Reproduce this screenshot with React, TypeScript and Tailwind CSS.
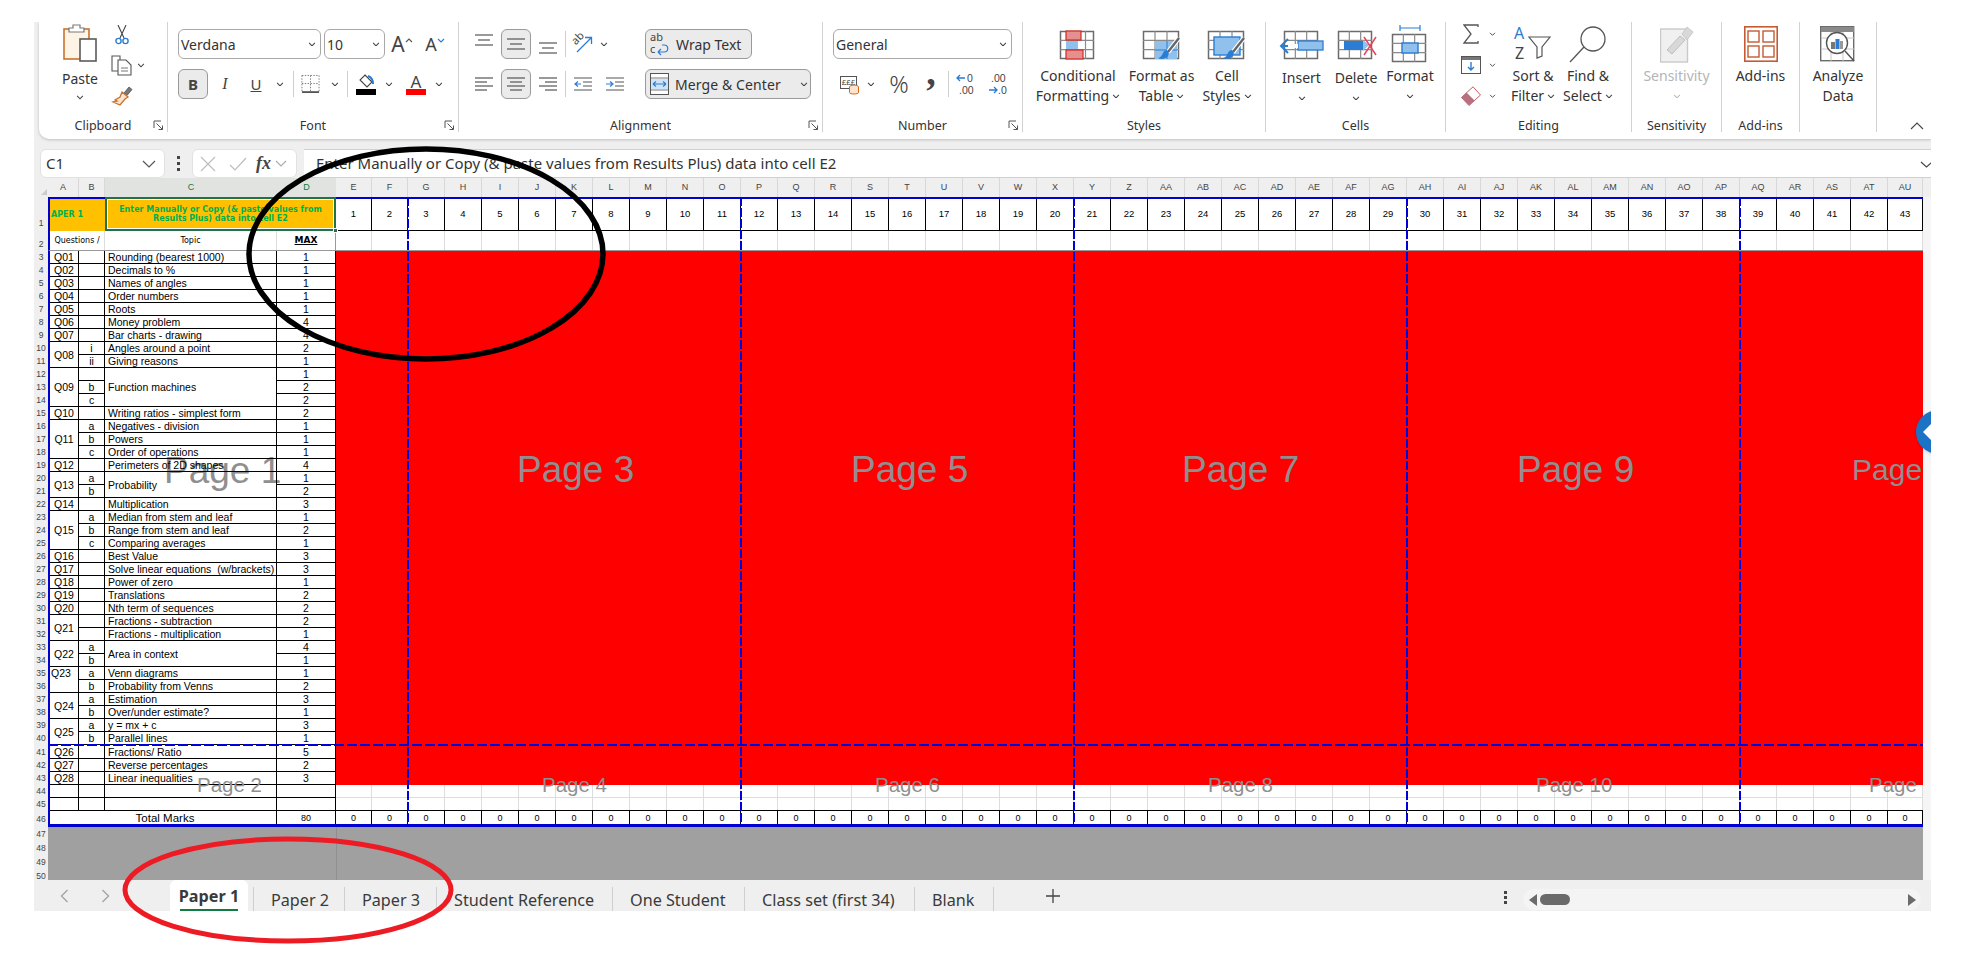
import React from "react";

const NOTO = "font-['Noto_Sans',sans-serif]";
const ARIAL = "font-['Liberation_Sans',Arial,sans-serif]";
const DEJA = "font-['DejaVu_Sans',Verdana,sans-serif]";

function Chev({ c = "#444", s = 8 }: { c?: string; s?: number }) {
  return (
    <svg width={s} height={s * 0.6} viewBox="0 0 8 5" className="shrink-0">
      <path d="M1 1l3 3 3-3" stroke={c} strokeWidth="1.1" fill="none" />
    </svg>
  );
}

function Sep() {
  return <div className="w-px h-[26px] mt-[2px] bg-[#cfcfcf] self-center shrink-0" />;
}

function Launcher() {
  return (
    <svg width="11" height="11" viewBox="0 0 11 11" className="shrink-0">
      <path d="M1 1h7M1 1v7" stroke="#555" strokeWidth="1" fill="none" />
      <path d="M3.5 3.5L9.5 9.5M9.5 5.5v4h-4" stroke="#555" strokeWidth="1" fill="none" />
    </svg>
  );
}

function PasteIcon() {
  return (
    <svg width="34" height="38" viewBox="0 0 34 38">
      <rect x="1" y="5" width="25" height="30" fill="#fdf4e6" stroke="#c9722c" strokeWidth="1.6" />
      <path d="M6 8V4h4V1h7v3h4v4z" fill="#fff" stroke="#7a7a7a" strokeWidth="1.2" />
      <rect x="17" y="15" width="16" height="22" fill="#fff" stroke="#5a5a5a" strokeWidth="1.6" />
    </svg>
  );
}
function ScissorsIcon() {
  return (
    <svg width="14" height="20" viewBox="0 0 14 20">
      <path d="M3 0l6 13M11 0L5 13" stroke="#444" strokeWidth="1.1" fill="none" />
      <circle cx="3.5" cy="16" r="2.6" fill="none" stroke="#2b7cd3" strokeWidth="1.4" />
      <circle cx="10.5" cy="16" r="2.6" fill="none" stroke="#2b7cd3" strokeWidth="1.4" />
    </svg>
  );
}
function CopyIcon() {
  return (
    <svg width="21" height="21" viewBox="0 0 21 21">
      <path d="M1 1h8v15H1z" fill="#fff" stroke="#555" strokeWidth="1.1" />
      <path d="M7 5h8l5 5v10H7z" fill="#fff" stroke="#555" strokeWidth="1.1" />
      <path d="M10 13h7M10 16h7" stroke="#777" strokeWidth="1" />
    </svg>
  );
}
function PainterIcon() {
  return (
    <svg width="22" height="20" viewBox="0 0 22 20">
      <path d="M13 7l5-6 3 2.5-5 6z" fill="#777" stroke="#555" strokeWidth="0.8" />
      <path d="M11 6l6 5-3 2-5 6-7-3 4-1-2-1 5-3z" fill="#fbe3cc" stroke="#c9722c" strokeWidth="1.3" />
    </svg>
  );
}
function GrowA({ up }: { up?: boolean }) {
  return (
    <div className="flex items-start">
      <span className={`text-[#444] leading-[24px] ${up ? "text-[21px]" : "text-[18px]"}`}>A</span>
      <svg width="8" height="6" viewBox="0 0 8 6" className="mt-[5px]">
        <path d={up ? "M1 5l3-3 3 3" : "M1 2l3 3 3-3"} stroke={up ? "#555" : "#2b7cd3"} strokeWidth="1.1" fill="none" />
      </svg>
    </div>
  );
}
function BorderIcon() {
  return (
    <svg width="20" height="20" viewBox="0 0 20 20">
      <path d="M1 1h18M1 1v17M19 1v17M10 1v17M1 9.5h18" stroke="#777" strokeWidth="1" strokeDasharray="1.5 1.5" fill="none" />
      <path d="M1 18.5h18" stroke="#333" strokeWidth="1.6" />
    </svg>
  );
}
function FillIcon() {
  return (
    <svg width="20" height="21" viewBox="0 0 20 21">
      <path d="M9 1l7 7-5 5-7-7z" fill="#fff" stroke="#444" strokeWidth="1.1" />
      <path d="M12 2c3 1 5 4 5 8" stroke="#2b7cd3" strokeWidth="2" fill="none" />
      <rect x="0" y="15" width="20" height="6" fill="#000" />
    </svg>
  );
}
function ColorA() {
  return (
    <div className="flex flex-col items-center w-[20px]">
      <span className="text-[17px] leading-[15px] text-[#444]">A</span>
      <span className="w-[20px] h-[6px] bg-[#f00]" />
    </div>
  );
}
function Lines({ kind, w = 18 }: { kind: "l" | "c" | "r"; w?: number }) {
  const a = kind === "l" ? [[0, 18], [0, 12], [0, 18], [0, 12]] : kind === "c" ? [[0, 18], [3, 15], [0, 18], [3, 15]] : [[0, 18], [6, 18], [0, 18], [6, 18]];
  return (
    <svg width={w} height="16" viewBox="0 0 18 16">
      {a.map((p, i) => (
        <path key={i} d={`M${p[0]} ${2 + i * 4}H${p[1]}`} stroke="#555" strokeWidth="1.2" />
      ))}
    </svg>
  );
}
function VAlign({ at }: { at: "t" | "m" | "b" }) {
  const ys = at === "t" ? [1, 6, 11] : at === "m" ? [3, 8, 13] : [4, 9, 14];
  const dy = at === "t" ? "-translate-y-[2px]" : at === "b" ? "translate-y-[3px]" : "";
  return (
    <svg width="18" height="16" viewBox="0 0 18 16" className={dy}>
      <path d={`M0 ${ys[0]}H18`} stroke="#555" strokeWidth="1.2" />
      <path d={`M3 ${ys[1]}H15`} stroke="#555" strokeWidth="1.2" />
      <path d={`M0 ${ys[2]}H18`} stroke="#555" strokeWidth="1.2" />
    </svg>
  );
}
function OrientIcon() {
  return (
    <div className="relative w-[24px] h-[24px]">
      <span className="absolute left-[0px] top-[-1px] text-[11px] leading-[14px] text-[#444] -rotate-45">ab</span>
      <svg width="24" height="24" viewBox="0 0 24 24" className="absolute left-0 top-0">
        <path d="M6 20L20 6M14 5.5h6.5V12" stroke="#2b7cd3" strokeWidth="1.3" fill="none" />
      </svg>
    </div>
  );
}
function Indent({ inc }: { inc?: boolean }) {
  return (
    <svg width="19" height="16" viewBox="0 0 19 16">
      <path d="M0 2h18M9 6h9M9 10h9M0 14h18" stroke="#555" strokeWidth="1.2" />
      <path d={inc ? "M0 8h6M4 5.5L7 8l-3 2.5" : "M7 8H1M4 5.5L1 8l3 2.5"} stroke="#2b7cd3" strokeWidth="1.2" fill="none" />
    </svg>
  );
}
function WrapIcon() {
  return (
    <div className="relative w-[20px] h-[26px] shrink-0 text-[11px] leading-[12px] text-[#444]">
      <span className="absolute left-0 top-0">ab</span>
      <span className="absolute left-0 top-[12px]">c</span>
      <svg width="20" height="26" viewBox="0 0 20 26" className="absolute left-0 top-0">
        <path d="M8 21h6c5 0 5-7 0-7h-2M8 21l3-3M8 21l3 3" stroke="#2b7cd3" strokeWidth="1.2" fill="none" />
      </svg>
    </div>
  );
}
function MergeIcon() {
  return (
    <svg width="19" height="22" viewBox="0 0 19 22" className="shrink-0">
      <rect x="0.5" y="0.5" width="18" height="21" fill="#fff" stroke="#555" />
      <path d="M1 5h17M1 17h17" stroke="#777" />
      <rect x="1" y="6" width="17" height="10" fill="#cfe4f7" />
      <path d="M3 11h13M3 11l3-2.5M3 11l3 2.5M16 11l-3-2.5M16 11l-3 2.5" stroke="#2b7cd3" strokeWidth="1.1" fill="none" />
    </svg>
  );
}
function AccountIcon() {
  return (
    <div className="relative w-[20px] h-[22px]">
      <span className={`absolute left-[1px] top-[3px] w-[17px] h-[13px] border border-[#555] bg-white text-[8px] leading-[11px] text-[#444] text-center ${ARIAL}`}>£££</span>
      <svg width="20" height="22" viewBox="0 0 20 22" className="absolute left-0 top-0">
        <ellipse cx="15" cy="14" rx="4.5" ry="2" fill="#fbe3cc" stroke="#d2691e" />
        <path d="M10.5 14v5.5c0 2 9 2 9 0V14" fill="#fbe3cc" stroke="#d2691e" />
      </svg>
    </div>
  );
}
function Decimal({ inc }: { inc?: boolean }) {
  return (
    <div className={`relative w-[20px] h-[24px] text-[10.5px] leading-[12px] text-[#444] ${ARIAL}`}>
      {inc ? (
        <>
          <svg width="10" height="10" viewBox="0 0 10 10" className="absolute left-0 top-[1px]"><path d="M9 5H1M4 2L1 5l3 3" stroke="#2b7cd3" strokeWidth="1.3" fill="none" /></svg>
          <span className="absolute left-[11px] top-0">0</span>
          <span className="absolute left-[3px] top-[12px]">.00</span>
        </>
      ) : (
        <>
          <span className="absolute left-[3px] top-0">.00</span>
          <svg width="10" height="10" viewBox="0 0 10 10" className="absolute left-0 top-[13px]"><path d="M1 5h8M6 2l3 3-3 3" stroke="#2b7cd3" strokeWidth="1.3" fill="none" /></svg>
          <span className="absolute left-[10px] top-[12px]">.0</span>
        </>
      )}
    </div>
  );
}
function GridBase({ w = 34, h = 28, cols = 3, rows = 3, children }: { w?: number; h?: number; cols?: number; rows?: number; children?: React.ReactNode }) {
  const cx = Array.from({ length: cols - 1 }, (_, i) => ((i + 1) * w) / cols);
  const ry = Array.from({ length: rows - 1 }, (_, i) => ((i + 1) * h) / rows);
  return (
    <svg width={w + 4} height={h + 4} viewBox={`-1 -3 ${w + 4} ${h + 4}`} className="overflow-visible">
      <rect x="0.5" y="0.5" width={w - 1} height={h - 1} fill="#fff" stroke="#6b6b6b" strokeWidth="1.5" />
      {cx.map((x) => (
        <path key={x} d={`M${x} 0v${h}`} stroke="#8a8a8a" strokeWidth="1.2" />
      ))}
      {ry.map((y) => (
        <path key={y} d={`M0 ${y}h${w}`} stroke="#8a8a8a" strokeWidth="1.2" />
      ))}
      {children}
    </svg>
  );
}
const Brush = () => (
  <>
    <path d="M36 7L25 21" stroke="#fff" strokeWidth="4.5" />
    <path d="M36 7L25 21" stroke="#666" strokeWidth="2.4" />
    <path d="M24 19c-3 0-4 3-5 5-1 2-3 3-4 3 3 2 8 1 10-2 1-2 1-4-1-6z" fill="#2b7cd3" />
  </>
);
const CondIcon = () => (
  <GridBase w={34} h={28} cols={4} rows={3}>
    <rect x="6" y="0" width="15" height="9" fill="#e58f8f" stroke="#d42a20" strokeWidth="1.2" />
    <rect x="6" y="10" width="11" height="8" fill="#8fc1ec" />
    <rect x="6" y="19" width="17" height="9" fill="#e58f8f" stroke="#d42a20" strokeWidth="1.2" />
  </GridBase>
);
const TableStyleIcon = () => (
  <GridBase w={36} h={28}>
    <rect x="12" y="10" width="22" height="18" fill="#8fc1ec" />
    <path d="M12 19h22M24 10v18" stroke="#2b7cd3" />
    <Brush />
  </GridBase>
);
const CellStyleIcon = () => (
  <GridBase w={36} h={28}>
    <rect x="6" y="6" width="26" height="18" fill="#8fc1ec" stroke="#2b7cd3" strokeWidth="1.4" />
    <Brush />
  </GridBase>
);
const InsertIcon = () => (
  <GridBase w={34} h={28}>
    <rect x="14" y="10" width="25" height="9" fill="#8fc1ec" stroke="#2b7cd3" strokeWidth="1.3" />
    <path d="M14 15H-3M4 8l-7 7 7 7" stroke="#2b7cd3" strokeWidth="2" fill="none" />
    <path d="M4 13h10v4H4" fill="#fff" />
  </GridBase>
);
const DeleteIcon = () => (
  <GridBase w={34} h={28}>
    <rect x="6" y="10" width="19" height="9" fill="#2b7cd3" />
    <path d="M25 9l6 5-6 6z" fill="#8fc1ec" />
    <path d="M26 6l12 18M38 6L26 24" stroke="#e6455f" strokeWidth="1.5" />
  </GridBase>
);
const FormatIcon = () => (
  <div className="flex flex-col items-center gap-0">
    <svg width="34" height="6" viewBox="0 0 34 6"><path d="M7 3h20M7 0v6M27 0v6" stroke="#2b7cd3" strokeWidth="1.2" /></svg>
    <GridBase w={34} h={28}>
      <rect x="10" y="9" width="16" height="10" fill="#8fc1ec" stroke="#2b7cd3" strokeWidth="1.4" />
    </GridBase>
  </div>
);
const SumIcon = () => (
  <svg width="17" height="20" viewBox="0 0 17 20">
    <path d="M15 3V1H1l7 9-7 9h14v-2" fill="none" stroke="#555" strokeWidth="1.3" />
  </svg>
);
const FillDown = () => (
  <svg width="20" height="18" viewBox="0 0 20 18">
    <rect x="0.5" y="0.5" width="19" height="17" fill="#fff" stroke="#555" />
    <rect x="1" y="1" width="18" height="3" fill="#777" />
    <path d="M10 6v8M7 11l3 3 3-3" stroke="#2b7cd3" strokeWidth="1.4" fill="none" />
  </svg>
);
const EraserIcon = () => (
  <svg width="20" height="20" viewBox="0 0 20 20">
    <path d="M12 0.8L19.5 9 8 19.5 0.5 11.5z" fill="#fff" stroke="#c0606a" strokeWidth="1" />
    <path d="M5.5 6.5l8 8L8 19.5 0.5 11.5z" fill="#b87080" />
  </svg>
);
const SortIcon = () => (
  <div className="relative w-[38px] h-[38px] text-[16px] leading-[16px]">
    <span className="absolute left-0 top-0 text-[#2b7cd3]">A</span>
    <span className="absolute left-[1px] top-[20px] text-[#444]">Z</span>
    <svg width="38" height="38" viewBox="0 0 38 38" className="absolute left-0 top-0">
      <path d="M15 12h21l-8 10v9l-5 2V22z" fill="#fff" stroke="#555" strokeWidth="1.2" />
    </svg>
  </div>
);
const FindIcon = () => (
  <svg width="38" height="38" viewBox="0 0 38 38">
    <circle cx="24" cy="14" r="12" fill="#fff" stroke="#555" strokeWidth="1.3" />
    <path d="M15 22L1 37" stroke="#555" strokeWidth="1.3" />
  </svg>
);
const SensitivityIcon = () => (
  <svg width="34" height="37" viewBox="0 0 34 37">
    <rect x="0.5" y="3" width="27" height="33" fill="#f0f0f0" stroke="#c9c9c9" strokeWidth="1.4" />
    <path d="M7 24L20 10l5 4-13 14z" fill="#d8d8d8" stroke="#bfbfbf" />
    <path d="M22 8l5-7 6 5-6 8z" fill="#d8d8d8" stroke="#c9c9c9" />
  </svg>
);
const AddinsIcon = () => (
  <svg width="34" height="36" viewBox="0 0 34 36">
    <rect x="0.8" y="0.8" width="32.4" height="34.4" fill="#fff" stroke="#c55a33" strokeWidth="1.6" />
    <rect x="4" y="5" width="11" height="11" fill="#fff" stroke="#c55a33" strokeWidth="1.4" />
    <rect x="19" y="5" width="11" height="11" fill="#fff" stroke="#c55a33" strokeWidth="1.4" />
    <rect x="4" y="20" width="11" height="11" fill="#fff" stroke="#c55a33" strokeWidth="1.4" />
    <rect x="19" y="20" width="11" height="11" fill="#fff" stroke="#c55a33" strokeWidth="1.4" />
  </svg>
);
const AnalyzeIcon = () => (
  <svg width="36" height="36" viewBox="0 0 36 36">
    <rect x="0.7" y="0.7" width="33" height="34" fill="#fff" stroke="#6b6b6b" strokeWidth="1.4" />
    <rect x="1" y="1" width="33" height="5" fill="#8a8a8a" />
    <path d="M1 12h33M1 23h33M11 6v29M23 6v29" stroke="#c8c8c8" />
    <circle cx="17" cy="17" r="10.5" fill="#fff" stroke="#555" strokeWidth="1.4" />
    <rect x="11" y="16" width="4" height="7" fill="#777" />
    <rect x="15.5" y="13" width="4" height="10" fill="#2b7cd3" />
    <rect x="20" y="15" width="3" height="8" fill="#999" />
    <path d="M25 25l9 10" stroke="#555" strokeWidth="1.5" />
  </svg>
);

function Big({ w, icon, l1, l2, chevInline, chevBelow, muted, low }: { w: string; icon: React.ReactNode; l1: string; l2?: string; chevInline?: boolean; chevBelow?: boolean; muted?: boolean; low?: boolean }) {
  return (
    <div className={`${w} shrink-0 flex flex-col items-center`}>
      <div className="h-[44px] flex items-center justify-center">{icon}</div>
      <div className={`text-[14px] leading-[20px] whitespace-nowrap ${low ? "mt-[2px]" : ""} ${muted ? "text-[#b5b5b5]" : "text-[#333]"}`}>{l1}</div>
      {l2 ? (
        <div className="text-[14px] leading-[20px] whitespace-nowrap text-[#333] flex items-center gap-[3px]">
          {l2}
          {chevInline ? <Chev s={8} /> : null}
        </div>
      ) : null}
      {chevBelow ? (
        <div className="h-[20px] flex items-center">
          <Chev c={muted ? "#bbb" : "#444"} />
        </div>
      ) : null}
    </div>
  );
}

function Group({ w, label, launcher, children }: { w: string; label?: string; launcher?: boolean; children: React.ReactNode }) {
  return (
    <div className={`${w} h-[110px] shrink-0 border-r border-[#d2d2d2] flex flex-col relative`}>
      <div className="h-[97px] flex">{children}</div>
      <div className="h-[13px] flex items-center justify-center relative text-[12.5px] text-[#333] leading-[13px]">
        {label}
        {launcher ? (
          <span className="absolute right-[3px] top-[1px]">
            <Launcher />
          </span>
        ) : null}
      </div>
    </div>
  );
}

const SELECT = "h-[30px] bg-white border border-[#a8a8a8] rounded-[6px] flex items-center justify-between text-[14px] text-[#333] pl-[2px] pr-[4px] shrink-0";
const ONBTN = "bg-[#ebebeb] border border-[#9a9a9a] rounded-[6px] flex items-center justify-center shrink-0";
const SLOT = "h-[30px] flex items-center justify-center shrink-0";

function Ribbon() {
  return (
    <div className={`ml-[5px] w-[1892px] h-[117px] bg-white rounded-bl-[10px] shadow-[0_1px_3px_rgba(0,0,0,0.2)] flex ${NOTO} relative`}>
      <Group w="w-[129px]" label="Clipboard" launcher>
        <div className="ml-[22px] w-[38px] flex flex-col items-center pt-[2px]">
          <PasteIcon />
          <div className="text-[14px] leading-[20px] text-[#333] mt-[7px]">Paste</div>
          <div className="mt-[6px]"><Chev /></div>
        </div>
        <div className="ml-[12px] flex flex-col pt-[3px] gap-[10px] w-[44px]">
          <div className="h-[20px] pl-[4px]"><ScissorsIcon /></div>
          <div className="h-[21px] flex items-center gap-[3px]"><CopyIcon /><span className="ml-[2px]"><Chev /></span></div>
          <div className="h-[20px]"><PainterIcon /></div>
        </div>
      </Group>

      <Group w="w-[291px]" label="Font" launcher>
        <div className="pl-[10px] pt-[7px] flex flex-col gap-[10px]">
          <div className="flex">
            <div className={`${SELECT} w-[143px]`}><span className={NOTO}>Verdana</span><Chev /></div>
            <div className={`${SELECT} w-[61px] ml-[3px]`}>10<Chev /></div>
            <div className={`${SLOT} w-[24px] ml-[5px]`}><GrowA up /></div>
            <div className={`${SLOT} w-[24px] ml-[9px]`}><GrowA /></div>
          </div>
          <div className="flex">
            <div className={`${ONBTN} w-[30px] h-[30px] font-bold text-[15px] text-[#444]`}>B</div>
            <div className={`${SLOT} w-[30px] ml-[2px] italic font-['Liberation_Serif',serif] text-[16px] text-[#444]`}>I</div>
            <div className={`${SLOT} w-[20px] ml-[6px] underline text-[15px] text-[#444]`}>U</div>
            <div className={`${SLOT} w-[10px] ml-[9px]`}><Chev /></div>
            <div className="ml-[8px]"><Sep /></div>
            <div className={`${SLOT} w-[19px] ml-[7px]`}><BorderIcon /></div>
            <div className={`${SLOT} w-[10px] ml-[10px]`}><Chev /></div>
            <div className="ml-[7px]"><Sep /></div>
            <div className={`${SLOT} w-[20px] ml-[8px]`}><FillIcon /></div>
            <div className={`${SLOT} w-[10px] ml-[8px]`}><Chev /></div>
            <div className={`${SLOT} w-[20px] ml-[12px]`}><ColorA /></div>
            <div className={`${SLOT} w-[10px] ml-[8px]`}><Chev /></div>
          </div>
        </div>
      </Group>

      <Group w="w-[364px]" label="Alignment" launcher>
        <div className="pl-[13px] pt-[7px] w-[186px] flex flex-col gap-[10px]">
          <div className="flex">
            <div className={`${SLOT} w-[24px]`}><VAlign at="t" /></div>
            <div className={`${ONBTN} w-[30px] h-[30px] ml-[5px]`}><VAlign at="m" /></div>
            <div className={`${SLOT} w-[24px] ml-[5px]`}><VAlign at="b" /></div>
            <div className="ml-[5px]"><Sep /></div>
            <div className={`${SLOT} w-[24px] ml-[5px]`}><OrientIcon /></div>
            <div className={`${SLOT} w-[10px] ml-[4px]`}><Chev /></div>
          </div>
          <div className="flex">
            <div className={`${SLOT} w-[24px]`}><Lines kind="l" /></div>
            <div className={`${ONBTN} w-[30px] h-[30px] ml-[5px]`}><Lines kind="c" /></div>
            <div className={`${SLOT} w-[24px] ml-[5px]`}><Lines kind="r" /></div>
            <div className="ml-[5px]"><Sep /></div>
            <div className={`${SLOT} w-[24px] ml-[5px]`}><Indent /></div>
            <div className={`${SLOT} w-[24px] ml-[8px]`}><Indent inc /></div>
          </div>
        </div>
        <div className="pt-[7px] flex flex-col gap-[10px]">
          <div className={`${ONBTN} w-[107px] h-[30px] justify-start pl-[4px] gap-[6px] text-[14px] text-[#333]`}><WrapIcon />Wrap Text</div>
          <div className={`${ONBTN} w-[166px] h-[30px] justify-start pl-[4px] gap-[6px] text-[14px] tracking-[0.1px] text-[#333]`}><MergeIcon />Merge &amp; Center<span className="ml-[13px]"><Chev /></span></div>
        </div>
      </Group>

      <Group w="w-[200px]" label="Number" launcher>
        <div className="pl-[10px] pt-[7px] flex flex-col gap-[10px]">
          <div className={`${SELECT} w-[179px]`}>General<Chev /></div>
          <div className="flex">
            <div className={`${SLOT} w-[20px] ml-[6px]`}><AccountIcon /></div>
            <div className={`${SLOT} w-[10px] ml-[7px]`}><Chev /></div>
            <div className={`${SLOT} w-[24px] ml-[11px] text-[24px] font-light text-[#444]`}>%</div>
            <div className={`${SLOT} w-[16px] ml-[12px] text-[38px] font-bold leading-none text-[#444] font-['Liberation_Serif',serif]`}><span className="-mt-[24px]">,</span></div>
            <div className="ml-[9px]"><Sep /></div>
            <div className={`${SLOT} w-[20px] ml-[7px]`}><Decimal inc /></div>
            <div className={`${SLOT} w-[20px] ml-[12px]`}><Decimal /></div>
          </div>
        </div>
      </Group>

      <Group w="w-[243px]" label="Styles">
        <div className="pl-[10px] flex">
          <Big w="w-[90px]" icon={<CondIcon />} l1="Conditional" l2="Formatting" chevInline />
          <Big w="w-[77px]" icon={<TableStyleIcon />} l1="Format as" l2="Table" chevInline />
          <Big w="w-[54px]" icon={<CellStyleIcon />} l1="Cell" l2="Styles" chevInline />
        </div>
      </Group>

      <Group w="w-[180px]" label="Cells">
        <div className="pl-[9px] flex">
          <Big w="w-[53px]" icon={<InsertIcon />} l1="Insert" chevBelow low />
          <Big w="w-[56px]" icon={<DeleteIcon />} l1="Delete" chevBelow low />
          <Big w="w-[52px]" icon={<FormatIcon />} l1="Format" chevBelow />
        </div>
      </Group>

      <Group w="w-[186px]" label="Editing">
        <div className="w-[59px] pl-[15px] pt-[2px] flex flex-col gap-[12px]">
          <div className="h-[20px] flex items-center gap-[9px]"><span className="ml-[2px]"><SumIcon /></span><Chev s={7} /></div>
          <div className="h-[18px] flex items-center gap-[8px]"><FillDown /><Chev s={7} /></div>
          <div className="h-[20px] flex items-center gap-[8px]"><EraserIcon /><Chev s={7} /></div>
        </div>
        <Big w="w-[56px]" icon={<SortIcon />} l1="Sort &" l2="Filter" chevInline />
        <Big w="w-[54px]" icon={<FindIcon />} l1="Find &" l2="Select" chevInline />
      </Group>

      <Group w="w-[90px]" label="Sensitivity">
        <Big w="w-full" icon={<SensitivityIcon />} l1="Sensitivity" chevBelow muted />
      </Group>
      <Group w="w-[78px]" label="Add-ins">
        <Big w="w-full" icon={<AddinsIcon />} l1="Add-ins" />
      </Group>
      <Group w="w-[77px]">
        <Big w="w-full" icon={<AnalyzeIcon />} l1="Analyze" l2="Data" />
      </Group>
      <div className="flex-1 flex items-end justify-end pr-[7px] pb-[9px]">
        <svg width="14" height="8" viewBox="0 0 14 8"><path d="M1 7l6-6 6 6" stroke="#444" fill="none" strokeWidth="1.1" /></svg>
      </div>
    </div>
  );
}

function FormulaBar() {
  return (
    <div className={`mt-[10px] h-[29px] flex ${NOTO} text-[15px] text-[#333]`}>
      <div className="ml-[6px] w-[125px] bg-white border border-[#e2e2e2] rounded-[6px] flex items-center justify-between pl-[5px] pr-[8px]">
        C1
        <svg width="14" height="8" viewBox="0 0 14 8"><path d="M1 1l6 6 6-6" stroke="#555" fill="none" strokeWidth="1.2" /></svg>
      </div>
      <div className="w-[27px] flex flex-col items-center justify-center gap-[3px]">
        <span className="w-[3px] h-[3px] bg-[#444]" />
        <span className="w-[3px] h-[3px] bg-[#444]" />
        <span className="w-[3px] h-[3px] bg-[#444]" />
      </div>
      <div className="w-[105px] bg-white border border-[#e2e2e2] rounded-[6px] flex items-center pl-[7px]">
        <svg width="16" height="16" viewBox="0 0 16 16"><path d="M1 1l14 14M15 1L1 15" stroke="#bdbdbd" strokeWidth="1.2" /></svg>
        <svg width="18" height="14" viewBox="0 0 18 14" className="ml-[13px]"><path d="M1 8l5 5L17 1" stroke="#bdbdbd" strokeWidth="1.2" fill="none" /></svg>
        <span className="ml-[9px] italic font-bold font-['Liberation_Serif',serif] text-[18px] text-[#444]">fx</span>
        <svg width="12" height="7" viewBox="0 0 12 7" className="ml-[4px]"><path d="M1 1l5 5 5-5" stroke="#aaa" fill="none" strokeWidth="1.1" /></svg>
      </div>
      <div className="ml-[7px] flex-1 bg-white border-y border-[#d0d0d0] flex items-center pl-[12px] relative">
        Enter Manually or Copy (&amp; paste values from Results Plus) data into cell E2
        <svg width="13" height="7" viewBox="0 0 13 7" className="absolute right-[-2px] top-[11px]"><path d="M1 1l5.5 5L12 1" stroke="#444" fill="none" strokeWidth="1.1" /></svg>
      </div>
    </div>
  );
}

const LETTERS = "ABCDEFGHIJKLMNOPQRSTUVWXYZ";
const COLS = Array.from({ length: 43 }, (_, i) => {
  const n = i + 4;
  return n < 26 ? LETTERS[n] : "A" + LETTERS[n - 26];
});
function cw(i: number) {
  if (i < 2) return "w-[36px]";
  if (i === 42) return "w-[35px]";
  return "w-[37px]";
}

function ColHeaders() {
  const base = `h-[19px] flex items-center justify-center text-[9px] ${ARIAL}`;
  const dim = `${base} text-[#444] border-r border-[#d8d8d8]`;
  const hl = `${base} text-[#107c41] bg-[#e1e3e1]`;
  return (
    <div className="flex h-[19px] bg-[#efefef]">
      <div className="w-[14px] flex items-end justify-end pr-[1px] pb-[2px]">
        <svg width="6" height="6" viewBox="0 0 6 6"><path d="M6 0v6H0z" fill="#ccc" /></svg>
      </div>
      <div className={`${dim} w-[31px]`}>A</div>
      <div className={`${dim} w-[26px]`}>B</div>
      <div className={`${hl} w-[172px]`}>C</div>
      <div className={`${hl} w-[59px]`}>D</div>
      {COLS.map((c, i) => (
        <div key={c} className={`${dim} ${cw(i)}`}>{c}</div>
      ))}
    </div>
  );
}

function RowHeaders() {
  const rows = Array.from({ length: 50 }, (_, i) => i + 1);
  const h = (n: number) => {
    if (n === 1) return "h-[34px] items-end pb-[1px]";
    if (n === 2) return "h-[20px] items-end";
    if (n === 41 || n >= 47) return "h-[14px] items-center";
    if (n === 46) return "h-[16px] items-center";
    return "h-[13px] items-center";
  };
  return (
    <div className={`w-[14px] h-[683px] overflow-hidden shrink-0 bg-[#efefef] ${ARIAL} text-[8.5px] text-[#444]`}>
      {rows.map((n) => (
        <div key={n} className={`flex justify-center ${h(n)}`}>{n}</div>
      ))}
    </div>
  );
}

type R = { a?: string; as?: number; b?: string; t?: string; ts?: number; m: string; blankA?: boolean };
const DATA: R[] = [
  { a: "Q01", t: "Rounding (bearest 1000)", m: "1" },
  { a: "Q02", t: "Decimals to %", m: "1" },
  { a: "Q03", t: "Names of angles", m: "1" },
  { a: "Q04", t: "Order numbers", m: "1" },
  { a: "Q05", t: "Roots", m: "1" },
  { a: "Q06", t: "Money problem", m: "4" },
  { a: "Q07", t: "Bar charts - drawing", m: "4" },
  { a: "Q08", as: 2, b: "i", t: "Angles around a point", m: "2" },
  { b: "ii", t: "Giving reasons", m: "1" },
  { a: "Q09", as: 3, t: "Function machines", ts: 3, m: "1" },
  { b: "b", m: "2" },
  { b: "c", m: "2" },
  { a: "Q10", t: "Writing ratios - simplest form", m: "2" },
  { a: "Q11", as: 3, b: "a", t: "Negatives - division", m: "1" },
  { b: "b", t: "Powers", m: "1" },
  { b: "c", t: "Order of operations", m: "1" },
  { a: "Q12", t: "Perimeters of 2D shapes", m: "4" },
  { a: "Q13", as: 2, b: "a", t: "Probability", ts: 2, m: "1" },
  { b: "b", m: "2" },
  { a: "Q14", t: "Multiplication", m: "3" },
  { a: "Q15", as: 3, b: "a", t: "Median from stem and leaf", m: "1" },
  { b: "b", t: "Range from stem and leaf", m: "2" },
  { b: "c", t: "Comparing averages", m: "1" },
  { a: "Q16", t: "Best Value", m: "3" },
  { a: "Q17", t: "Solve linear equations  (w/brackets)", m: "3" },
  { a: "Q18", t: "Power of zero", m: "1" },
  { a: "Q19", t: "Translations", m: "2" },
  { a: "Q20", t: "Nth term of sequences", m: "2" },
  { a: "Q21", as: 2, t: "Fractions - subtraction", m: "2" },
  { t: "Fractions - multiplication", m: "1" },
  { a: "Q22", as: 2, b: "a", t: "Area in context", ts: 2, m: "4" },
  { b: "b", m: "1" },
  { a: "Q23", as: 2, b: "a", t: "Venn diagrams", m: "1", blankA: true },
  { b: "b", t: "Probability from Venns", m: "2" },
  { a: "Q24", as: 2, b: "a", t: "Estimation", m: "3" },
  { b: "b", t: "Over/under estimate?", m: "1" },
  { a: "Q25", as: 2, b: "a", t: "y = mx + c", m: "3" },
  { b: "b", t: "Parallel lines", m: "1" },
  { a: "Q26", t: "Fractions/ Ratio", m: "5" },
  { a: "Q27", t: "Reverse percentages", m: "2" },
  { a: "Q28", t: "Linear inequalities", m: "3" },
  { m: "", a: "", t: "" },
  { m: "", a: "", t: "" },
];

const CELL = "border-r border-b border-black flex items-center overflow-hidden whitespace-pre leading-[12px]";
function span(n?: number) {
  if (n === 2) return "row-span-2";
  if (n === 3) return "row-span-3";
  return "";
}

function LeftBlock() {
  return (
    <div className={`w-[288px] shrink-0 flex flex-col relative z-10 ${ARIAL} text-black`}>
      <div className="h-[34px] flex">
        <div className={`w-[57px] bg-[#ffc000] border-l-2 border-t-2 border-[#0000d0] flex items-center pl-[1px] font-bold text-[8px] text-[#00b050] overflow-hidden ${DEJA}`}>APER 1</div>
        <div className="w-[231px] border-2 border-[#217346] relative">
          <div className={`h-full border border-white bg-[#ffc000] flex items-center justify-center text-center font-bold text-[8px] leading-[9px] text-[#00b050] ${DEJA}`}>
            Enter Manually or Copy (&amp; paste values from<br />Results Plus) data into cell E2
          </div>
          <span className="absolute right-[-4px] bottom-[-4px] w-[5px] h-[5px] bg-[#217346] border border-white" />
        </div>
      </div>
      <div className={`h-[20px] flex border-l-2 border-l-[#0000d0] border-b border-b-[#999] text-[8px] ${DEJA}`}>
        <div className="w-[55px] flex items-center justify-center border-r border-[#ddd]">Questions /</div>
        <div className="w-[172px] flex items-center justify-center border-r border-[#ddd]">Topic</div>
        <div className="w-[59px] flex items-center justify-center font-bold underline text-[9px] border-r border-[#999]">MAX</div>
      </div>
      <div className="grid grid-cols-[29px_26px_172px_59px] grid-rows-[repeat(38,13px)_14px_repeat(5,13px)] border-l-2 border-[#0000d0] text-[10.5px]">
        {DATA.map((r, i) => (
          <React.Fragment key={i}>
            {r.a !== undefined ? (
              <div className={`${CELL} ${span(r.as)} ${r.blankA ? "items-start justify-start pl-[1px]" : "justify-center"}`}>{r.a}</div>
            ) : null}
            <div className={`${CELL} justify-center`}>{r.b ?? ""}</div>
            {r.t !== undefined ? <div className={`${CELL} ${span(r.ts)} pl-[3px]`}>{r.t}</div> : null}
            <div className={`${CELL} justify-center`}>{r.m}</div>
          </React.Fragment>
        ))}
        <div className={`${CELL} col-span-3 justify-center pl-[4px] border-b-0 text-[11.5px]`}>Total Marks</div>
        <div className={`${CELL} justify-center border-b-0 text-[9px]`}>80</div>
      </div>
      <div className="h-[3px] bg-[#0000d0]" />
    </div>
  );
}

function RightBlock() {
  return (
    <div className={`w-[1587px] shrink-0 flex flex-col relative ${ARIAL} text-black`}>
      <div className="h-[34px] flex border-t-2 border-t-[#0000d0] border-b border-b-black">
        {COLS.map((c, i) => (
          <div key={c} className={`${cw(i)} border-r border-black flex items-center justify-center text-[9.5px]`}>{i + 1}</div>
        ))}
      </div>
      <div className="h-[20px] flex border-b border-[#999]">
        {COLS.map((c, i) => (
          <div key={c} className={`${cw(i)} border-r border-[#ddd]`} />
        ))}
      </div>
      <div className="h-[534px] bg-[#ff0000]" />
      <div className="h-[13px] flex border-b border-[#ddd]">
        {COLS.map((c, i) => (
          <div key={c} className={`${cw(i)} border-r border-[#ddd]`} />
        ))}
      </div>
      <div className="h-[13px] flex border-b border-black">
        {COLS.map((c, i) => (
          <div key={c} className={`${cw(i)} border-r border-[#ddd]`} />
        ))}
      </div>
      <div className="h-[13px] flex">
        {COLS.map((c, i) => (
          <div key={c} className={`${cw(i)} border-r border-black flex items-end justify-center text-[9px] leading-[11px]`}>0</div>
        ))}
      </div>
      <div className="h-[3px] bg-[#0000d0]" />
      <div className="absolute left-[71px] top-0 bottom-[3px] w-[2px] bg-[repeating-linear-gradient(180deg,#0000d8_0_9px,transparent_9px_11px)]" />
      <div className="absolute left-[404px] top-0 bottom-[3px] w-[2px] bg-[repeating-linear-gradient(180deg,#0000d8_0_9px,transparent_9px_11px)]" />
      <div className="absolute left-[737px] top-0 bottom-[3px] w-[2px] bg-[repeating-linear-gradient(180deg,#0000d8_0_9px,transparent_9px_11px)]" />
      <div className="absolute left-[1070px] top-0 bottom-[3px] w-[2px] bg-[repeating-linear-gradient(180deg,#0000d8_0_9px,transparent_9px_11px)]" />
      <div className="absolute left-[1403px] top-0 bottom-[3px] w-[2px] bg-[repeating-linear-gradient(180deg,#0000d8_0_9px,transparent_9px_11px)]" />
    </div>
  );
}

function Watermark({ cls, size, children }: { cls: string; size: string; children: React.ReactNode }) {
  return (
    <div className={`absolute ${cls} ${size} ${ARIAL} leading-none whitespace-nowrap text-[#8f8f8f]`}>{children}</div>
  );
}

function Sheet() {
  const lg = "text-[37px]";
  const sm = "text-[20.5px]";
  return (
    <div className="flex flex-col">
      <ColHeaders />
      <div className="flex h-[683px]">
        <RowHeaders />
        <div className="w-[1875px] shrink-0 h-[683px] overflow-hidden relative bg-[#a0a0a0]">
          <div className="flex bg-white h-[630px]">
            <LeftBlock />
            <RightBlock />
          </div>
          <div className="absolute left-[288px] top-[630px] bottom-0 w-px bg-[#8f8f8f]" />
          <div className="absolute left-0 right-0 top-[547px] h-[2px] z-20 bg-[repeating-linear-gradient(90deg,#0000d8_0_10px,transparent_10px_13px)]" />
          <Watermark cls="left-[116px] top-[255px]" size={lg}>Page 1</Watermark>
          <Watermark cls="left-[469px] top-[254px] z-20" size={lg}>Page 3</Watermark>
          <Watermark cls="left-[803px] top-[254px] z-20" size={lg}>Page 5</Watermark>
          <Watermark cls="left-[1134px] top-[254px] z-20" size={lg}>Page 7</Watermark>
          <Watermark cls="left-[1469px] top-[254px] z-20" size={lg}>Page 9</Watermark>
          <Watermark cls="left-[1804px] top-[258px] z-20" size="text-[30px]">Page</Watermark>
          <Watermark cls="left-[149px] top-[578px] z-20" size={sm}>Page 2</Watermark>
          <Watermark cls="left-[494px] top-[578px] z-20" size={sm}>Page 4</Watermark>
          <Watermark cls="left-[827px] top-[578px] z-20" size={sm}>Page 6</Watermark>
          <Watermark cls="left-[1160px] top-[578px] z-20" size={sm}>Page 8</Watermark>
          <Watermark cls="left-[1488px] top-[578px] z-20" size={sm}>Page 10</Watermark>
          <Watermark cls="left-[1821px] top-[578px] z-20" size={sm}>Page</Watermark>
        </div>
        <div className="w-[8px] shrink-0 bg-[#f5f5f5]" />
      </div>
    </div>
  );
}

function TabItem({ w, children }: { w: string; children: React.ReactNode }) {
  return (
    <div className={`${w} h-[24px] self-end border-r border-[#cfcfcf] pl-[17px] pt-[3px] flex items-center whitespace-nowrap text-[16.2px] text-[#3a3a3a] shrink-0`}>
      {children}
    </div>
  );
}

function TabBar() {
  return (
    <div className={`h-[31px] bg-[#efefef] flex ${NOTO}`}>
      <div className="w-[136px] shrink-0 flex items-center pl-[26px] gap-[32px]">
        <svg width="9" height="14" viewBox="0 0 9 14"><path d="M7.5 1L1.5 7l6 6" stroke="#a6a6a6" strokeWidth="1.4" fill="none" /></svg>
        <svg width="9" height="14" viewBox="0 0 9 14"><path d="M1.5 1l6 6-6 6" stroke="#a6a6a6" strokeWidth="1.4" fill="none" /></svg>
      </div>
      <div className="w-[78px] h-[31px] shrink-0 bg-white rounded-t-[6px] flex flex-col items-center pt-[4px]">
        <div className="text-[16.2px] leading-[24px] font-bold text-[#3a3a3a]">Paper 1</div>
        <div className="w-[58px] h-[2px] bg-[#107c41] mt-[1px]" />
      </div>
      <div className="ml-[5px] w-px h-[24px] self-end bg-[#cfcfcf]" />
      <TabItem w="w-[91px]">Paper 2</TabItem>
      <TabItem w="w-[92px]">Paper 3</TabItem>
      <TabItem w="w-[176px]">Student Reference</TabItem>
      <TabItem w="w-[132px]">One Student</TabItem>
      <TabItem w="w-[170px]">Class set (first 34)</TabItem>
      <TabItem w="w-[79px]">Blank</TabItem>
      <div className="w-[118px] shrink-0 flex items-center justify-center">
        <svg width="14" height="14" viewBox="0 0 14 14"><path d="M7 0v14M0 7h14" stroke="#444" strokeWidth="1.3" /></svg>
      </div>
      <div className="w-[395px] shrink-0 flex items-center justify-end pt-[4px]">
        <div className="flex flex-col gap-[2px]">
          <span className="w-[3px] h-[3px] bg-[#444]" />
          <span className="w-[3px] h-[3px] bg-[#444]" />
          <span className="w-[3px] h-[3px] bg-[#444]" />
        </div>
      </div>
      <div className="ml-[16px] w-[398px] h-[21px] mt-[9px] rounded-full bg-[#f4f4f4] flex items-center pl-[6px] pr-[5px] shrink-0">
        <svg width="8" height="12" viewBox="0 0 8 12"><path d="M8 0v12L0 6z" fill="#6b6b6b" /></svg>
        <div className="ml-[3px] w-[30px] h-[11px] rounded-full bg-[#6b6b6b]" />
        <div className="flex-1" />
        <svg width="8" height="12" viewBox="0 0 8 12"><path d="M0 0v12l8-6z" fill="#6b6b6b" /></svg>
      </div>
    </div>
  );
}

export default function App() {
  return (
    <div className="w-[1974px] h-[966px] bg-white relative overflow-hidden pt-[22px] pl-[34px]">
      <div className="w-[1897px] h-[889px] bg-[#efefef] relative overflow-hidden flex flex-col">
        <Ribbon />
        <FormulaBar />
        <Sheet />
        <TabBar />
        <svg width="46" height="46" viewBox="0 0 46 46" className="absolute left-[1881px] top-[387px] z-30 drop-shadow">
          <circle cx="23" cy="23" r="22" fill="#1b73c5" />
          <path d="M8 23l8-8v5h14v6H16v5z" fill="#fff" />
        </svg>
      </div>
      <svg width="1974" height="966" viewBox="0 0 1974 966" className="absolute left-0 top-0 z-40 pointer-events-none">
        <ellipse cx="426" cy="254" rx="177" ry="105" fill="none" stroke="#000" strokeWidth="5.5" />
        <ellipse cx="288" cy="890" rx="163" ry="51" fill="none" stroke="#ed1c24" strokeWidth="5" />
      </svg>
    </div>
  );
}
